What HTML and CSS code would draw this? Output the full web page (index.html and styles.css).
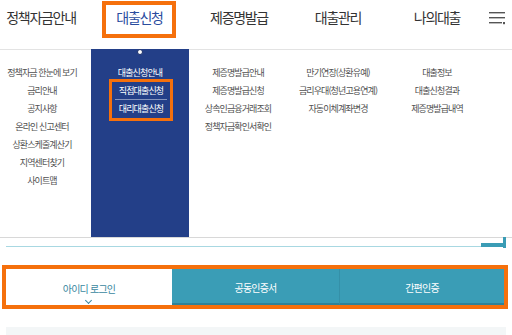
FILE: index.html
```
<!DOCTYPE html>
<html lang="ko">
<head>
<meta charset="utf-8">
<link rel="stylesheet" href="styles.css">
</head>
<body>
<header class="gnb">
  <div class="gnb-item"><span class="gnb-link">정책자금안내</span></div>
  <div class="gnb-item"><span class="gnb-link active">대출신청</span></div>
  <div class="gnb-item"><span class="gnb-link">제증명발급</span></div>
  <div class="gnb-item"><span class="gnb-link">대출관리</span></div>
  <div class="gnb-item"><span class="gnb-link">나의대출</span></div>
  <div class="gnb-menu">
    <svg width="17" height="14" viewBox="0 0 17 14">
      <rect x="0" y="1" width="16" height="1.4" fill="#555"/>
      <rect x="0" y="6" width="16" height="1.4" fill="#555"/>
      <rect x="0" y="11" width="13" height="1.4" fill="#555"/>
      <rect x="14" y="11" width="2" height="2.2" fill="#555"/>
    </svg>
  </div>
</header>
<nav class="mega">
  <ul class="col col1">
    <li>정책자금 한눈에 보기</li>
    <li>금리안내</li>
    <li>공지사항</li>
    <li>온라인 신고센터</li>
    <li>상환스케줄계산기</li>
    <li>지역센터찾기</li>
    <li>사이트맵</li>
  </ul>
  <div class="col col2">
    <span class="dot"></span>
    <ul>
      <li>대출신청안내</li>
    </ul>
    <ul class="hl">
      <li class="sep">직접대출신청</li>
      <li>대리대출신청</li>
    </ul>
  </div>
  <ul class="col">
    <li>제증명발급안내</li>
    <li>제증명발급신청</li>
    <li>상속인금융거래조회</li>
    <li>정책자금확인서확인</li>
  </ul>
  <ul class="col">
    <li>만기연장(상환유예)</li>
    <li>금리우대(청년고용연계)</li>
    <li>자동이체계좌변경</li>
  </ul>
  <ul class="col">
    <li>대출정보</li>
    <li>대출신청결과</li>
    <li>제증명발급내역</li>
  </ul>
</nav>
<div class="deco"><span class="corner-h"></span><span class="corner-v"></span></div>
<div class="tabs">
  <div class="tab on">아이디 로그인<span class="chev"></span></div>
  <div class="tab">공동인증서</div>
  <div class="tab last">간편인증</div>
</div>
<div class="panel"></div>
</body>
</html>
```
FILE: styles.css
```
* { box-sizing: border-box; }
html, body { margin: 0; padding: 0; background: #fff; }
body {
  font-family: "Noto Sans CJK KR", "Noto Sans", sans-serif;
  width: 512px;
  overflow: hidden;
}
ul { list-style: none; margin: 0; padding: 0; }

.gnb {
  display: grid;
  grid-template-columns: 82px 114px 86px 112px 86px 1fr;
  height: 49px;
  padding-top: 1px;
  align-items: start;
}
.gnb-item { display: flex; justify-content: center; }
.gnb-link {
  display: block;
  border: 4px solid transparent;
  padding: 0 10px 5px;
  line-height: 24px;
  font-size: 14px;
  letter-spacing: -1.3px;
  color: #333;
  white-space: nowrap;
}
.gnb-link.active {
  border-color: #f5700c;
  color: #2a4c9e;
  padding: 0 9px 5px 10px;
}
.gnb-menu { padding: 10px 0 0 9px; }
.gnb-menu svg { display: block; }

.mega {
  display: grid;
  grid-template-columns: 91px 98px 98px 102px 96px 1fr;
  height: 189px;
  border-top: 1px solid #e3e3e3;
  border-bottom: 1px solid #d8d8d8;
}
.col {
  display: flex;
  flex-direction: column;
  align-items: center;
  padding-top: 14px;
  font-size: 9px;
  letter-spacing: -0.9px;
  line-height: 18px;
  color: #505050;
  text-align: center;
  white-space: nowrap;
}
.col1 { padding-right: 7px; }
.col2 {
  position: relative;
  align-items: stretch;
  margin-top: -1px;
  padding-top: 15px;
  background: #233f88;
  color: #fff;
}
.dot {
  position: absolute;
  left: 46px;
  top: 0;
  width: 6px;
  height: 6px;
  border-radius: 50%;
  background: #fff;
  border: 1px solid #1a2f6a;
}
.hl {
  margin: -3px 16px 0 18px;
  border: 3px solid #f5700c;
}
.hl li { line-height: 18px; }
.hl .sep {
  line-height: 17px;
  border-bottom: 1px solid rgba(255,255,255,0.45);
  margin: 0 3px;
}

.deco {
  position: relative;
  margin: 0 6px;
  height: 9px;
  border-bottom: 1px solid #a8d8e2;
}
.corner-h {
  position: absolute;
  right: 0;
  bottom: -1px;
  width: 25px;
  height: 4px;
  background: #3a9cb5;
}
.corner-v {
  position: absolute;
  right: 0;
  top: -1px;
  width: 3px;
  height: 11px;
  background: #3a9cb5;
}

.tabs {
  display: grid;
  grid-template-columns: 166px 167px 1fr;
  margin: 18px 4px 0 2px;
  border: 4px solid #f5700c;
  height: 44px;
}
.tab {
  position: relative;
  display: flex;
  align-items: center;
  justify-content: center;
  background: #3a9db6;
  border-bottom: 2px solid #2e8299;
  color: #fff;
  font-size: 10px;
  letter-spacing: -0.8px;
  padding-top: 2px;
}
.tab.last { border-left: 1px solid #3590a8; }
.tab.on {
  background: #fff;
  color: #3a88a0;
  border-bottom: 0;
}
.chev {
  position: absolute;
  left: 80px;
  bottom: 2px;
  width: 5px;
  height: 5px;
  border-right: 1.3px solid #3a88a0;
  border-bottom: 1.3px solid #3a88a0;
  transform: rotate(45deg);
}

.panel {
  margin: 18px 6px 0;
  height: 20px;
  background: #f3f6f7;
}
```
